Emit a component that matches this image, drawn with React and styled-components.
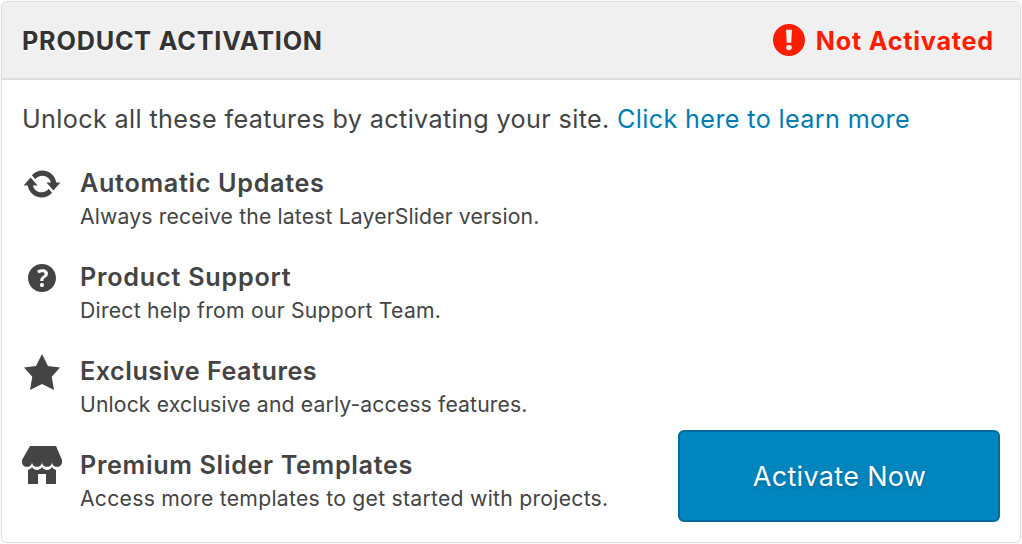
import React from 'react';
import styled, { createGlobalStyle } from 'styled-components';

const GlobalStyle = createGlobalStyle`
  * { box-sizing: border-box; }
  body {
    margin: 0;
    background: #fbfbfb;
    color: #444;
    font-family: Inter, "Liberation Sans", sans-serif;
  }
`;

const Card = styled.section`
  width: 1020px;
  height: 542px;
  margin: 1px;
  display: flex;
  flex-direction: column;
  background: #fff;
  border: 1px solid #dedede;
  border-radius: 6px;
  overflow: hidden;
`;

const Header = styled.header`
  height: 78px;
  flex: none;
  display: flex;
  align-items: center;
  justify-content: space-between;
  padding: 0 26px 0 20px;
  background: #f0f0f0;
  border-bottom: 2px solid #dedede;
`;

const Title = styled.h2`
  margin: 2px 0 0;
  font-size: 25.2px;
  line-height: 32px;
  font-weight: 700;
  letter-spacing: 0.8px;
  color: #333;
  text-shadow: 0 2px 0 #fff;
  white-space: nowrap;
`;

const Status = styled.div`
  display: flex;
  align-items: center;
  gap: 7px;
  color: #ff1d00;
`;

const StatusText = styled.span`
  margin-top: 2px;
  font-size: 25.2px;
  line-height: 32px;
  font-weight: 650;
  letter-spacing: 0.77px;
  white-space: nowrap;
`;

const Icon = styled.svg`
  display: block;
  width: 40px;
  height: 40px;
  flex: none;
  fill: currentColor;
`;

const Body = styled.div`
  flex: 1;
  display: flex;
  flex-direction: column;
  padding: 23px 20px 20px;
`;

const Lead = styled.p`
  margin: 0;
  font-size: 25.2px;
  line-height: 32px;
  letter-spacing: 0.355px;
  white-space: nowrap;
`;

const Link = styled.a`
  color: #007cb2;
  text-decoration: none;
`;

const Content = styled.div`
  flex: 1;
  display: flex;
  justify-content: space-between;
  align-items: flex-end;
`;

const Features = styled.ul`
  list-style: none;
  align-self: flex-start;
  margin: 29px 0 0;
  padding: 0;
  display: flex;
  flex-direction: column;
`;

const Feature = styled.li`
  display: flex;
  gap: 18px;
  height: 94px;
  &:last-child { height: 70px; }
`;

const FeatureName = styled.h3`
  margin: 3px 0 0;
  font-size: 25.2px;
  line-height: 32px;
  font-weight: 600;
  letter-spacing: ${(p) => p.$spacing}px;
  white-space: nowrap;
`;

const FeatureText = styled.p`
  margin: 3px 0 0;
  font-size: 21.2px;
  line-height: 28px;
  letter-spacing: ${(p) => p.$spacing}px;
  white-space: nowrap;
`;

const Button = styled.button`
  width: 322px;
  height: 92px;
  padding: 2px 0 0 1px;
  font: 400 27px/32px Inter, "Liberation Sans", sans-serif;
  letter-spacing: 0.32px;
  color: #fff;
  background: #0085be;
  border: 2px solid #006a9e;
  border-radius: 6px;
  text-shadow: 0 2px 3px #006799;
`;

const WARNING = 'M10 2c4.42 0 8 3.58 8 8s-3.58 8-8 8-8-3.58-8-8 3.58-8 8-8zm1.13 9.38l.35-6.46H8.52l.35 6.46h2.26zm-.09 3.36c.24-.23.37-.55.37-.96 0-.42-.12-.74-.36-.97s-.59-.35-1.06-.35-.82.12-1.07.35-.37.55-.37.97c0 .41.13.73.38.96.26.23.61.34 1.06.34s.8-.11 1.05-.34z';

const FEATURES = [
  {
    name: 'Automatic Updates',
    text: 'Always receive the latest LayerSlider version.',
    nameSpacing: 0.67,
    textSpacing: 0.14,
    icon: 'M10.2 3.28c3.53 0 6.43 2.61 6.92 6h2.08l-3.5 4-3.5-4h2.32c-.45-1.97-2.21-3.45-4.32-3.45-1.45 0-2.73.71-3.54 1.78L4.95 5.66C6.23 4.2 8.11 3.28 10.2 3.28zm-.4 13.44c-3.52 0-6.43-2.61-6.92-6H.8l3.5-4c1.17 1.33 2.33 2.67 3.5 4H5.48c.45 1.97 2.21 3.45 4.32 3.45 1.45 0 2.73-.71 3.54-1.78l1.71 1.95c-1.28 1.46-3.15 2.38-5.25 2.38z',
  },
  {
    name: 'Product Support',
    text: 'Direct help from our Support Team.',
    nameSpacing: 0.76,
    textSpacing: 0.23,
    icon: 'M17 10c0-3.87-3.14-7-7-7-3.87 0-7 3.13-7 7s3.13 7 7 7c3.86 0 7-3.13 7-7zm-6.3 1.48H9.14v-.43c0-.38.08-.7.24-.98s.46-.57.88-.89c.41-.29.68-.53.81-.71.14-.18.2-.39.2-.62 0-.25-.09-.44-.28-.58-.19-.13-.45-.19-.79-.19-.58 0-1.25.19-2 .57l-.64-1.28c.87-.49 1.8-.74 2.77-.74.81 0 1.45.2 1.92.58.48.39.71.91.71 1.55 0 .43-.09.8-.29 1.11-.19.32-.57.67-1.11 1.06-.38.28-.61.49-.71.63-.1.15-.15.34-.15.57v.35zm-1.47 2.74c-.18-.17-.27-.42-.27-.73 0-.33.08-.58.26-.75s.43-.25.77-.25c.32 0 .57.09.75.26s.27.42.27.74c0 .3-.09.55-.27.72-.18.18-.43.27-.75.27-.33 0-.58-.09-.76-.26z',
  },
  {
    name: 'Exclusive Features',
    text: 'Unlock exclusive and early-access features.',
    nameSpacing: 0.52,
    textSpacing: 0.13,
    icon: 'M10 1l3 6 6 .75-4.12 4.62L16 19l-6-3-6 3 1.13-6.63L1 7.75 7 7z',
  },
  {
    name: 'Premium Slider Templates',
    text: 'Access more templates to get started with projects.',
    nameSpacing: 0.66,
    textSpacing: 0.255,
    icon: 'M1 10c.41.29.96.43 1.5.43.55 0 1.09-.14 1.5-.43.62-.46 1-1.17 1-2 0 .83.37 1.54 1 2 .41.29.96.43 1.5.43.55 0 1.09-.14 1.5-.43.62-.46 1-1.17 1-2 0 .83.37 1.54 1 2 .41.29.96.43 1.51.43.54 0 1.08-.14 1.49-.43.62-.46 1-1.17 1-2 0 .83.37 1.54 1 2 .41.29.96.43 1.5.43.55 0 1.09-.14 1.5-.43.63-.46 1-1.17 1-2V7l-3-7H4L0 7v1c0 .83.37 1.54 1 2zm2 8.99h5v-5h4v5h5v-7c-.37-.05-.72-.22-1-.43-.63-.45-1-.73-1-1.56 0 .83-.38 1.11-1 1.56-.41.3-.95.43-1.49.44-.55 0-1.1-.14-1.51-.44-.63-.45-1-.73-1-1.56 0 .83-.38 1.11-1 1.56-.41.3-.95.43-1.5.44-.54 0-1.09-.14-1.5-.44-.63-.45-1-.73-1-1.57 0 .84-.38 1.12-1 1.57-.29.21-.63.38-1 .44v6.99z',
  },
];

const Glyph = ({ d }) => (
  <Icon viewBox="0 0 20 20" aria-hidden="true"><path d={d} /></Icon>
);

export default function App() {
  return (
    <>
      <GlobalStyle />
      <Card>
        <Header>
          <Title>PRODUCT ACTIVATION</Title>
          <Status>
            <Glyph d={WARNING} />
            <StatusText>Not Activated</StatusText>
          </Status>
        </Header>
        <Body>
          <Lead>
            Unlock all these features by activating your site. <Link>Click here to learn more</Link>
          </Lead>
          <Content>
            <Features>
              {FEATURES.map((f) => (
                <Feature key={f.name}>
                  <Glyph d={f.icon} />
                  <div>
                    <FeatureName $spacing={f.nameSpacing}>{f.name}</FeatureName>
                    <FeatureText $spacing={f.textSpacing}>{f.text}</FeatureText>
                  </div>
                </Feature>
              ))}
            </Features>
            <Button>Activate Now</Button>
          </Content>
        </Body>
      </Card>
    </>
  );
}
